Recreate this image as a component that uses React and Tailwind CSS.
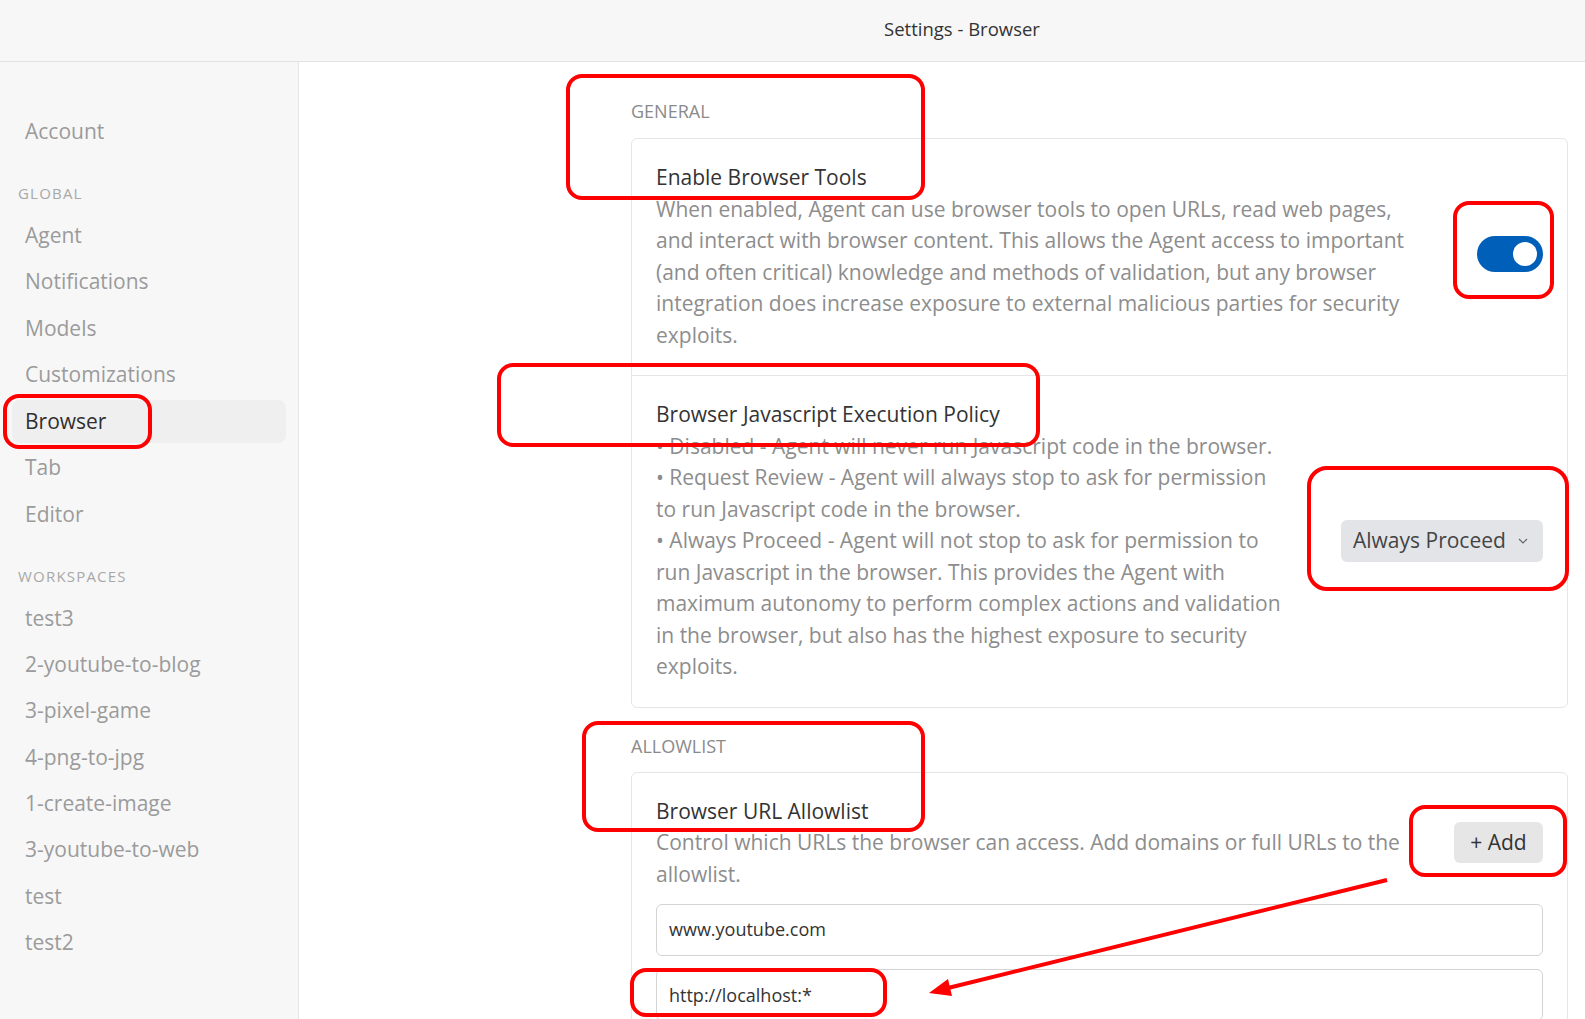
import React from "react";

const navGlobal = ["Agent", "Notifications", "Models", "Customizations", "Browser", "Tab", "Editor"];
const navWs = ["test3", "2-youtube-to-blog", "3-pixel-game", "4-png-to-jpg", "1-create-image", "3-youtube-to-web", "test", "test2"];

function NavItem({ label, active }) {
  return (
    <div
      className={
        "h-[43px] flex items-center pl-[13px] rounded-[8px] text-[21px] " +
        (active ? "bg-[#efefef] text-[#2f2f2f]" : "text-[#9b9b9b]")
      }
    >
      {label}
    </div>
  );
}

function GroupLabel({ children }) {
  return (
    <div className="h-[20px] leading-[20px] mt-[30px] mb-[11px] pl-[6px] text-[15px] tracking-[1.2px] text-[#a8a8a8]">
      {children}
    </div>
  );
}

function Lines({ lines }) {
  return (
    <div className="text-[21px] leading-[31.5px] text-[#8d8d8d] whitespace-nowrap">
      {lines.map((l, i) => (
        <div key={i}>{l}</div>
      ))}
    </div>
  );
}

function RedBox({ className }) {
  return <div className={"absolute border-[4px] border-[#ff0000] rounded-[16px] pointer-events-none " + className} />;
}

export default function App() {
  return (
    <div className="relative w-[1585px] h-[1019px] overflow-hidden bg-white font-['Open_Sans','Noto_Sans',sans-serif]">
      {/* title bar */}
      <header className="h-[62px] bg-[#f7f7f7] border-b border-[#e2e2e2] flex items-center pb-[4px] pl-[884px] text-[18.5px] text-[#333]">
        Settings - Browser
      </header>

      <div className="flex h-[957px]">
        {/* sidebar */}
        <aside className="w-[299px] shrink-0 bg-[#f7f7f7] border-r border-[#e6e6e6] px-3 pt-[48px]">
          <NavItem label="Account" />
          <GroupLabel>GLOBAL</GroupLabel>
          <div className="flex flex-col gap-[3.5px]">
            {navGlobal.map((n) => (
              <NavItem key={n} label={n} active={n === "Browser"} />
            ))}
          </div>
          <GroupLabel>WORKSPACES</GroupLabel>
          <div className="flex flex-col gap-[3.3px]">
            {navWs.map((n) => (
              <NavItem key={n} label={n} />
            ))}
          </div>
        </aside>

        {/* main */}
        <main className="flex-1 pl-[332px] pr-[17px] pt-[37px]">
          <div className="h-[24px] leading-[24px] text-[18px] text-[#8a8a8a] mb-[15px]">GENERAL</div>
          <div className="border border-[#e6e6e6] rounded-[6px]">
            <div className="flex items-center justify-between px-6 pt-[23px] pb-[24px] border-b border-[#e6e6e6]">
              <div>
                <div className="text-[21px] leading-[31.5px] text-[#333]">Enable Browser Tools</div>
                <Lines
                  lines={[
                    "When enabled, Agent can use browser tools to open URLs, read web pages,",
                    "and interact with browser content. This allows the Agent access to important",
                    "(and often critical) knowledge and methods of validation, but any browser",
                    "integration does increase exposure to external malicious parties for security",
                    "exploits.",
                  ]}
                />
              </div>
              <div className="w-[66px] h-[36px] rounded-full bg-[#005fb8] flex items-center justify-end pr-[6px] mt-[-6px]">
                <div className="w-[24px] h-[24px] rounded-full bg-white" />
              </div>
            </div>
            <div className="flex items-center justify-between px-6 pt-[23px] pb-[24px]">
              <div>
                <div className="text-[21px] leading-[31.5px] text-[#333]">Browser Javascript Execution Policy</div>
                <Lines
                  lines={[
                    "• Disabled - Agent will never run Javascript code in the browser.",
                    "• Request Review - Agent will always stop to ask for permission",
                    "to run Javascript code in the browser.",
                    "• Always Proceed - Agent will not stop to ask for permission to",
                    "run Javascript in the browser. This provides the Agent with",
                    "maximum autonomy to perform complex actions and validation",
                    "in the browser, but also has the highest exposure to security",
                    "exploits.",
                  ]}
                />
              </div>
              <div className="w-[202px] h-[42px] rounded-[6px] bg-[#e3e4e8] flex items-center pl-[12px] gap-[12px] text-[21px] text-[#444]">
                <span>Always Proceed</span>
                <svg width="10" height="6" viewBox="0 0 10 6" fill="none">
                  <path d="M1 1l4 4 4-4" stroke="#666" strokeWidth="1.2" />
                </svg>
              </div>
            </div>
          </div>

          <div className="h-[24px] leading-[24px] text-[18px] text-[#8a8a8a] mt-[26px] mb-[14px]">ALLOWLIST</div>
          <div className="border border-[#e6e6e6] rounded-[6px] px-6 pt-[23px] pb-6">
            <div className="flex items-center justify-between">
              <div>
                <div className="text-[21px] leading-[31.5px] text-[#333]">Browser URL Allowlist</div>
                <Lines
                  lines={[
                    "Control which URLs the browser can access. Add domains or full URLs to the",
                    "allowlist.",
                  ]}
                />
              </div>
              <div className="w-[89px] h-[41px] rounded-[6px] bg-[#e6e6e6] flex items-center justify-center text-[21px] text-[#333]">
                + Add
              </div>
            </div>
            <div className="mt-[13.5px] flex flex-col gap-[13.5px]">
              <div className="h-[52px] border border-[#d4d4d4] rounded-[6px] flex items-center pl-[12px] text-[18px] text-[#333]">
                www.youtube.com
              </div>
              <div className="h-[52px] border border-[#d4d4d4] rounded-[6px] flex items-center pl-[12px] text-[18px] text-[#333]">
                http://localhost:*
              </div>
            </div>
          </div>
        </main>
      </div>

      {/* red annotations */}
      <RedBox className="left-[566px] top-[74px] w-[359px] h-[126px]" />
      <RedBox className="left-[1453px] top-[201px] w-[101px] h-[98px]" />
      <RedBox className="left-[3px] top-[394px] w-[149px] h-[55px] rounded-[10px]" />
      <RedBox className="left-[497px] top-[363px] w-[543px] h-[84px]" />
      <RedBox className="left-[1307px] top-[466px] w-[262px] h-[125px] rounded-[20px]" />
      <RedBox className="left-[582px] top-[721px] w-[343px] h-[111px]" />
      <RedBox className="left-[1409px] top-[805px] w-[158px] h-[72px]" />
      <RedBox className="left-[630px] top-[968px] w-[257px] h-[49px] rounded-[8px]" />
      <svg className="absolute left-0 top-0 pointer-events-none" width="1585" height="1019">
        <line x1="1387" y1="880" x2="948" y2="988" stroke="#ff0000" strokeWidth="4" />
        <polygon points="929,993 952,996 948,979" fill="#ff0000" />
      </svg>
    </div>
  );
}
